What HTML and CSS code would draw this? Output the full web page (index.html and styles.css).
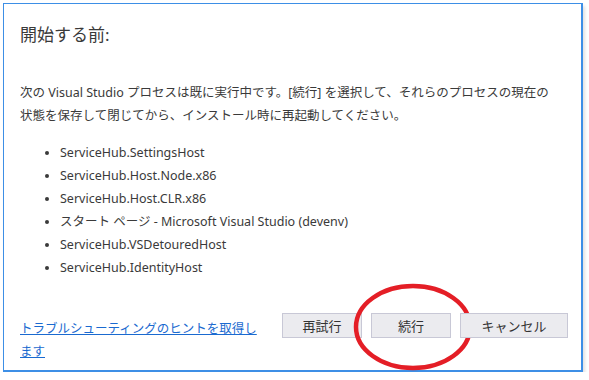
FILE: index.html
```html
<!DOCTYPE html>
<html lang="ja">
<head>
    <meta charset="UTF-8">
    <title>開始する前</title>
    <link rel="stylesheet" href="styles.css">
</head>
<body>
    <div class="dialog">
        <h1 class="title">開始する前:</h1>
        <p class="message">次の Visual Studio プロセスは既に実行中です。[続行] を選択して、それらのプロセスの現在の状態を保存して閉じてから、インストール時に再起動してください。</p>
        <ul class="process-list">
            <li>ServiceHub.SettingsHost</li>
            <li>ServiceHub.Host.Node.x86</li>
            <li>ServiceHub.Host.CLR.x86</li>
            <li>スタート ページ - Microsoft Visual Studio (devenv)</li>
            <li>ServiceHub.VSDetouredHost</li>
            <li>ServiceHub.IdentityHost</li>
        </ul>
        <div class="footer">
            <a class="help-link" href="#">トラブルシューティングのヒントを取得します</a>
            <div class="btn-group">
                <button class="btn btn-retry">再試行</button>
                <button class="btn btn-continue">続行
                    <svg class="circle" width="126" height="92" viewBox="0 0 126 92">
                        <ellipse cx="63" cy="46" rx="57" ry="41" fill="none" stroke="#e41e26" stroke-width="4.5" />
                    </svg>
                </button>
                <button class="btn btn-cancel">キャンセル</button>
            </div>
        </div>
    </div>
</body>
</html>
```

FILE: styles.css
```css
body {
    margin: 0;
    padding: 3px 0 0 3px;
    background: #ffffff;
    font-family: "Noto Sans", "Noto Sans CJK JP", sans-serif;
}

.dialog {
    width: 580px;
    height: 369px;
    box-sizing: border-box;
    border: 1px solid #3d8fe6;
    border-right-width: 2px;
    border-bottom-width: 2px;
    background: white;
    box-shadow: 2px 3px 3px rgba(0, 0, 0, 0.12);
    padding: 0 13px 0 16px;
    display: flex;
    flex-direction: column;
}

.title {
    font-size: 17px;
    font-weight: normal;
    color: #3a3a3a;
    margin: 19px 0 0 0;
    line-height: 24px;
}

.message {
    font-size: 12.5px;
    color: #3a3a3a;
    line-height: 23px;
    margin: 34px 10px 0 0;
}

.process-list {
    font-size: 12.5px;
    color: #3a3a3a;
    line-height: 23px;
    margin: 14px 0 0 0;
    padding-left: 40px;
}

.footer {
    display: flex;
    justify-content: space-between;
    align-items: flex-start;
    margin-top: 33px;
}

.help-link {
    width: 242px;
    margin-top: 5px;
    font-size: 12.5px;
    line-height: 23px;
    color: #1a6ad0;
    text-decoration: underline;
}

.btn-group {
    display: flex;
    gap: 9px;
    margin-top: 1px;
}

.btn {
    position: relative;
    height: 25px;
    background: #ebebef;
    border: 1px solid #c8c8d6;
    font-family: "Noto Sans", "Noto Sans CJK JP", sans-serif;
    font-size: 13px;
    color: #333;
    padding: 0;
}

.btn-retry,
.btn-continue {
    width: 80px;
}

.btn-cancel {
    width: 108px;
}

.circle {
    position: absolute;
    left: -22px;
    top: -33px;
    pointer-events: none;
}
```
